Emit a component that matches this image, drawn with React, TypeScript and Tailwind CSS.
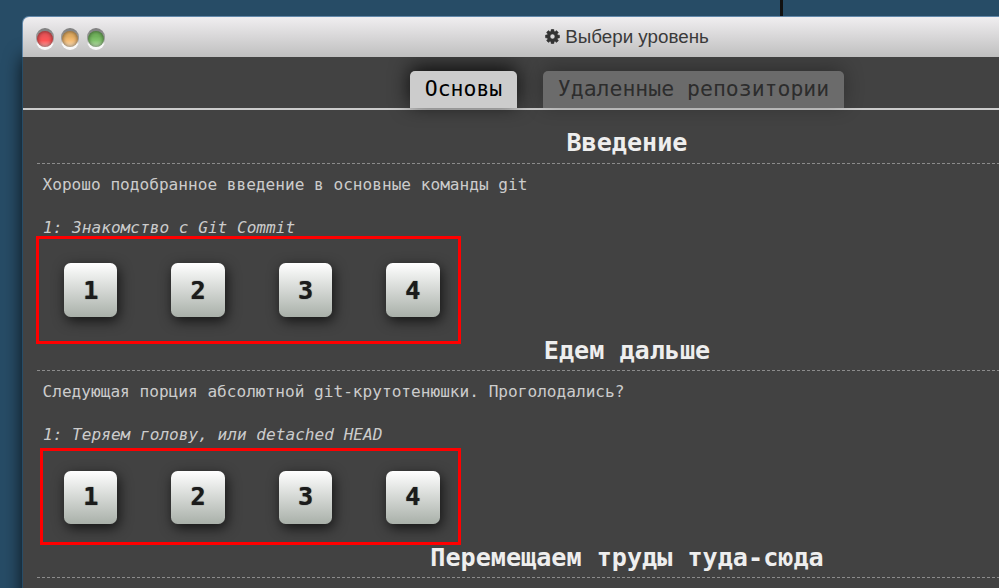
type Series = {
  title: string;
  about?: string;
  level?: string;
  heading: string;
  row?: string;
  button?: string;
};

const SERIES: Series[] = [
  {
    title: "Введение",
    about: "Хорошо подобранное введение в основные команды git",
    level: "1: Знакомство с Git Commit",
    heading: "leading-[40px]",
    row: "mt-[25px]",
    button: "h-[54px] pt-px",
  },
  {
    title: "Едем дальше",
    about: "Следующая порция абсолютной git-крутотенюшки. Проголодались?",
    level: "1: Теряем голову, или detached HEAD",
    heading: "leading-[38px]",
    row: "mt-[26px]",
    button: "h-[53px] pb-[2px]",
  },
  { title: "Перемещаем труды туда-сюда", heading: "leading-[38px]" },
];

function Light({ className }: { className: string }) {
  return (
    <span className="flex h-[22px] w-[18px] items-start justify-center rounded-full bg-[linear-gradient(#7d7d7d,#a0a0a0_50%,#f8f8f8_75%)] pt-[3px]">
      <span
        className={`size-4 rounded-full shadow-[inset_0_0_4px_rgba(0,0,0,0.6)] ${className}`}
      />
    </span>
  );
}

function Gear() {
  return (
    <svg
      viewBox="-40 -40 1616 1616"
      className="mt-[-2px] size-[15px] shrink-0"
      fill="#333"
      stroke="#333"
      strokeWidth="50"
    >
      <path d="M1024 768q0-106-75-181t-181-75-181 75-75 181 75 181 181 75 181-75 75-181zm512-109v222q0 12-8 23t-20 13l-185 28q-19 54-39 91 35 50 107 138 10 12 10 25t-9 23q-27 37-99 108t-94 71q-12 0-26-9l-138-108q-44 23-91 38-16 136-29 186-7 28-36 28H657q-14 0-24.500-8.500T621 1506l-28-184q-49-16-90-37l-141 107q-10 9-25 9-14 0-25-11-126-114-165-168-7-10-7-23 0-12 8-23 15-21 51-66.500t54-70.500q-27-50-41-99L29 913q-13-2-21-12.500T0 877V655q0-12 8-23t19-13l186-28q14-46 39-92-40-57-107-138-10-12-10-24 0-10 9-23 26-36 98.500-107.500T337 135q13 0 26 10l138 107q44-23 91-38 16-136 29-186 7-28 36-28h222q14 0 24.500 8.500T915 30l28 184q49 16 90 37l142-107q9-9 24-9 13 0 25 10 129 119 165 170 7 8 7 22 0 12-8 23-15 21-51 66.500t-54 70.500q26 50 41 98l183 28q13 2 21 12.500t8 23.500z" />
    </svg>
  );
}

function LevelButton({ n, className }: { n: number; className?: string }) {
  return (
    <button
      className={`w-[53.4px] shrink-0 rounded-[6.700px] bg-[linear-gradient(#ffffff,#a9b0a9)] text-center text-[25.140px] leading-[50px] font-bold text-[#1b1b1b] shadow-[2px_4px_13px_rgba(0,0,0,0.7)] [text-shadow:0_0_1px_rgba(0,0,0,0.8)] ${className}`}
    >
      {n}
    </button>
  );
}

function SeriesBlock({ title, about, level, heading, row, button }: Series) {
  return (
    <section className="h-[207px] pr-[14px] pl-[14px]">
      <h3
        className={`flex h-[43px] items-end justify-center text-[25.140px] font-bold text-[#eee] ${heading}`}
      >
        {title}
      </h3>
      <div className="h-px bg-[repeating-linear-gradient(90deg,#8c8c8c_0_3px,transparent_3px_5px)]" />
      {about && (
        <>
          <p className="mt-[11px] pl-[5.500px] text-[16.110px] leading-5 text-[#ccc]">{about}</p>
          <p className="mt-[23px] pl-[6px] text-[16.110px] leading-5 text-[#ccc] italic">{level}</p>
          <div className={`flex gap-[54px] pl-[27px] ${row}`}>
            {[1, 2, 3, 4].map((n) => (
              <LevelButton key={n} n={n} className={button} />
            ))}
          </div>
        </>
      )}
    </section>
  );
}

export default function App() {
  return (
    <div className="relative h-[588px] w-[999px] overflow-hidden bg-[#274c66] pt-4 pl-[22px] font-['DejaVu_Sans_Mono',monospace]">
      <div className="absolute top-0 left-[780px] h-4 w-[3px] bg-[#111]" />
      <main className="relative h-[640px] w-[1209px] rounded-t-[7px] shadow-[0_40px_18px_rgba(0,0,0,0.75)]">
        <header className="relative flex h-[41px] items-center rounded-t-[7px] border-t border-l border-[#6288aa] bg-[linear-gradient(#f0eef0,#bfbfbf)]">
          <div className="flex gap-[7.500px] pt-[3px] pl-[13px]">
            <Light className="bg-[linear-gradient(#ee5558_35%,#ff5556_60%,#ffb0ae)]" />
            <div className="-ml-px flex gap-2">
              <Light className="bg-[linear-gradient(#e3ad62_35%,#f5bd76_60%,#ffe5c3)]" />
              <Light className="bg-[linear-gradient(#72b45d_35%,#83c46e_60%,#c5e7b9)]" />
            </div>
          </div>
          <h1 className="absolute inset-0 flex items-center justify-center gap-[5px] font-['Liberation_Sans',sans-serif] text-[18.800px] text-[#3a3a3a]">
            <Gear />
            Выбери уровень
          </h1>
        </header>
        <div className="ml-px h-[600px] bg-[#424242]">
          <nav className="flex h-[53px] items-end justify-center gap-[26px] border-b-2 border-[#ccc] text-[21.480px] leading-[36px]">
            <span className="h-[37px] w-[107px] rounded-t-[5px] bg-[#ccc] text-center text-black shadow-[0_-4px_20px_rgba(0,0,0,0.8)]">
              Основы
            </span>
            <span className="h-[37px] w-[301px] rounded-t-[5px] bg-[#6b6b6b] text-center text-[#2d2d2d] shadow-[0_-3px_20px_rgba(0,0,0,0.3)]">
              Удаленные репозитории
            </span>
          </nav>
          <div className="pt-[10px]">
            {SERIES.map((s) => (
              <SeriesBlock key={s.title} {...s} />
            ))}
          </div>
        </div>
      </main>
      <div className="absolute top-[236px] left-[36px] h-[108px] w-[425px] border-3 border-[#f00]" />
      <div className="absolute top-[448px] left-[40px] h-[97px] w-[421px] border-3 border-[#f00]" />
    </div>
  );
}
